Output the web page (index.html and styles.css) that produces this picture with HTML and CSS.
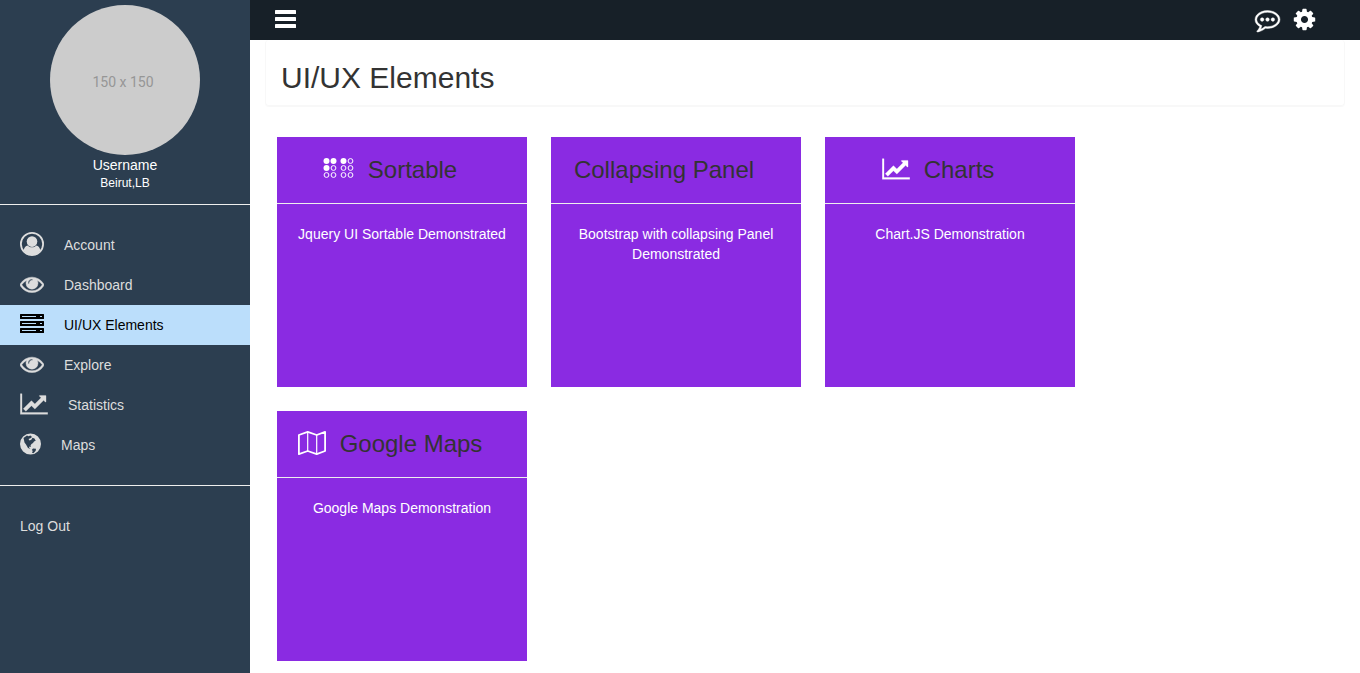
FILE: index.html
```html
<!DOCTYPE html>
<html lang="en">
<head>
<meta charset="utf-8">
<title>UI/UX Elements</title>
<link rel="stylesheet" href="styles.css">
</head>
<body>
<svg class="sprite" aria-hidden="true">
  <symbol id="chart" viewBox="0 0 2048 1792"><path stroke="currentColor" stroke-width="24" d="M2048 1536v128h-2048v-1536h128v1408h1920zm-128-1248v435q0 21-19.5 29.5t-35.5-7.5l-121-121-633 633q-10 10-23 10t-23-10l-233-233-416 416-192-192 585-585q10-10 23-10t23 10l233 233 464-464-121-121q-16-16-7.5-35.5t29.5-19.5h435q14 0 23 9t9 23z"/></symbol>
  <symbol id="eye" viewBox="0 0 1792 1792"><path stroke="currentColor" stroke-width="36" d="M1664 960q-152-236-381-353 61 104 61 225 0 185-131.5 316.5t-316.5 131.5-316.5-131.5-131.5-316.5q0-121 61-225-229 117-381 353 133 205 333.5 326.5t434.5 121.5 434.5-121.5 333.5-326.5zm-720-384q0-20-14-34t-34-14q-125 0-214.5 89.5t-89.5 214.5q0 20 14 34t34 14 34-14 14-34q0-86 61-147t147-61q20 0 34-14t14-34zm848 384q0 34-20 69-140 230-376.5 368.5t-499.5 138.5-499.5-139-376.5-368q-20-35-20-69t20-69q140-229 376.5-368t499.5-139 499.5 139 376.5 368q20 35 20 69z"/></symbol>
</svg>
<div class="layout">
  <aside class="sidebar">
    <div class="profile">
      <div class="avatar">150 x 150</div>
      <div class="name">Username</div>
      <div class="place">Beirut,LB</div>
    </div>
    <nav class="menu">
      <a href="#"><svg class="icon" viewBox="0 0 24 24"><circle cx="12" cy="12" r="11.1" fill="none" stroke="currentColor" stroke-width="1.8"/><circle cx="12" cy="9.600" r="5.300"/><path d="M3.600 18.600C4.200 15.400 5.600 13.600 7.600 13.400c2.600 2.500 6.200 2.500 8.800 0 2 .2 3.400 2 4 5.200C18.500 21.400 15.400 23 12 23s-6.500-1.600-8.400-4.400z"/></svg>Account</a>
      <a href="#"><svg class="icon"><use href="#eye"/></svg>Dashboard</a>
      <a href="#" class="active" aria-current="page"><svg class="icon" viewBox="0 0 24 24"><path fill-rule="evenodd" d="M.5 2h23a.5.500 0 0 1 .5.500v4a.5.500 0 0 1-.5.500H.5A.5.500 0 0 1 0 6.500v-4A.5.500 0 0 1 .5 2zM2 4v1h14V4zM20 4v1h2v-1zM.5 9h23a.5.500 0 0 1 .5.500v4a.5.500 0 0 1-.5.500H.5a.5.500 0 0 1-.5-.5v-4A.5.500 0 0 1 .5 9zM2 11v1h14v-1zM20 11v1h2v-1zM.5 16h23a.5.500 0 0 1 .5.500v4a.5.500 0 0 1-.5.500H.5a.5.500 0 0 1-.5-.5v-4A.5.500 0 0 1 .5 16zM2 18v1h14v-1zM20 18v1h2v-1z"/></svg>UI/UX Elements</a>
      <a href="#"><svg class="icon"><use href="#eye"/></svg>Explore</a>
      <a href="#"><svg class="icon wide"><use href="#chart"/></svg>Statistics</a>
      <a href="#"><svg class="icon narrow" viewBox="0 0 21 24"><path fill-rule="evenodd" d="M10.500 1.500a10.500 10.500 0 1 1 0 21 10.500 10.500 0 0 1 0-21zM3.500 6L7 3.500l1.500.8 2-.8 1.500 1.500-1.500 1.300-2 .7 1 1.500 1.800-.8 1.200-2 2 .8 1.200 2.300-1.700.7-1 1.500-1.500 1-1 1.500.5 1.500-1.500-.5-.5 1 1.500 1.500-2.500-1L6 12.500l-1.500-2L4 8zM13 16.500l3 .3-.3 2-2.200 2.400-1.500-.4.800-1.800-1-1z"/></svg>Maps</a>
    </nav>
    <nav class="menu"><a href="#">Log Out</a></nav>
  </aside>
  <div class="page">
    <header class="topbar">
      <button type="button" aria-label="Toggle menu"><svg class="icon narrow" viewBox="0 0 21 24"><rect y="3" width="21" height="4" rx=".6"/><rect y="10" width="21" height="4" rx=".6"/><rect y="17" width="21" height="4" rx=".6"/></svg></button>
      <div class="actions">
        <button type="button" aria-label="Messages"><svg class="icon large" viewBox="0 0 1792 1792"><path stroke="currentColor" stroke-width="30" d="M640 896q0 53-37.500 90.500t-90.500 37.500-90.500-37.500-37.500-90.500 37.500-90.500 90.500-37.500 90.500 37.500 37.500 90.500zm384 0q0 53-37.500 90.500t-90.500 37.500-90.500-37.500-37.500-90.500 37.500-90.500 90.500-37.500 90.500 37.500 37.500 90.500zm384 0q0 53-37.500 90.500t-90.500 37.500-90.500-37.500-37.500-90.500 37.500-90.500 90.500-37.500 90.500 37.500 37.500 90.500zm-512-512q-204 0-381.500 69.500t-282 187.500-104.500 255q0 112 71.500 213.500t201.500 175.500l87 50-27 96q-24 91-70 172 152-63 275-171l43-38 57 6q69 8 130 8 204 0 381.500-69.500t282-187.500 104.500-255-104.500-255-282-187.500-381.500-69.500zm896 512q0 174-120 321.500t-326 233-450 85.500q-70 0-145-8-198 175-460 242-49 14-114 22h-5q-15 0-27-10.500t-16-27.500v-1q-3-4-.5-12t2-10 4.500-9.500l6-9 7-8.500 8-9q7-8 31-34.500t34.500-38 31-39.500 32.500-51 27-59 26-76q-157-89-247.500-220t-90.500-281q0-174 120-321.500t326-233 450-85.500 450 85.500 326 233 120 321.500z"/></svg></button>
        <button type="button" aria-label="Settings"><svg class="icon large" viewBox="0 0 1792 1792"><path d="M1152 896q0-106-75-181t-181-75-181 75-75 181 75 181 181 75 181-75 75-181zm512-109v222q0 12-8 23t-20 13l-185 28q-19 54-39 91 35 50 107 138 10 12 10 25t-9 23q-27 37-99 108t-94 71q-12 0-26-9l-138-108q-44 23-91 38-16 136-29 186-7 28-36 28h-222q-14 0-24.500-8.500t-11.500-21.500l-28-184q-49-16-90-37l-141 107q-10 9-25 9-14 0-25-11-126-114-165-168-7-10-7-23 0-12 8-23 15-21 51-66.500t54-70.500q-27-50-41-99l-183-27q-13-2-21-12.500t-8-23.500v-222q0-12 8-23t19-13l186-28q14-46 39-92-40-57-107-138-10-12-10-24 0-10 9-23 26-36 98.500-107.500t94.500-71.500q13 0 26 10l138 107q44-23 91-38 16-136 29-186 7-28 36-28h222q14 0 24.500 8.500t11.500 21.500l28 184q49 16 90 37l142-107q9-9 24-9 13 0 25 10 129 119 165 170 7 8 7 22 0 12-8 23-15 21-51 66.500t-54 70.500q26 50 41 98l183 28q13 2 21 12.500t8 23.500z"/></svg></button>
      </div>
    </header>
    <main class="main">
      <h1 class="title">UI/UX Elements</h1>
      <div class="cards">
        <article class="card">
          <h2><svg class="icon dots" viewBox="0 0 31 24"><g><circle cx="3.500" cy="4" r="3"/><circle cx="10.500" cy="4" r="3"/><circle cx="20.500" cy="4" r="3"/><circle cx="3.500" cy="11" r="3"/></g><g fill="none" stroke="currentColor"><circle cx="27.500" cy="4" r="2.400"/><circle cx="10.500" cy="11" r="2.400"/><circle cx="20.500" cy="11" r="2.400"/><circle cx="27.500" cy="11" r="2.400"/><circle cx="3.500" cy="18" r="2.400"/><circle cx="10.500" cy="18" r="2.400"/><circle cx="20.500" cy="18" r="2.400"/><circle cx="27.500" cy="18" r="2.400"/></g></svg>Sortable</h2>
          <p>Jquery UI Sortable Demonstrated</p>
        </article>
        <article class="card">
          <h2>Collapsing Panel</h2>
          <p>Bootstrap with collapsing Panel Demonstrated</p>
        </article>
        <article class="card">
          <h2><svg class="icon wide"><use href="#chart"/></svg>Charts</h2>
          <p>Chart.JS Demonstration</p>
        </article>
        <article class="card">
          <h2><svg class="icon wide" viewBox="0 0 28 24"><g fill="none" stroke="currentColor" stroke-linejoin="round"><path stroke-width="1.800" d="M.9 4L9.700.9l9 3.100 8.400-3.100V20l-8.400 3.100-9-3.100L.9 23.100z"/><path stroke-width="1.200" d="M9.700.8V20M18.700 4v19.200"/></g></svg>Google Maps</h2>
          <p>Google Maps Demonstration</p>
        </article>
      </div>
    </main>
  </div>
</div>
</body>
</html>
```

FILE: styles.css
```css
* { box-sizing: border-box; }
body {
  margin: 0;
  font: 14px/20px "Liberation Sans", Arial, sans-serif;
  color: #333;
  background: #fff;
}
.sprite { display: none; }
.layout { display: flex; min-height: 100vh; }
.icon { width: 24px; height: 24px; flex: none; display: block; margin-bottom: 2px; fill: currentColor; overflow: visible; }
.icon.wide { width: 28px; }
.icon.narrow { width: 21px; }
.icon.large { width: 25px; height: 25px; }
.icon.dots { width: 31px; }

.sidebar { width: 250px; flex: none; background: #2c3e50; color: #fff; }
.profile {
  display: flex;
  flex-direction: column;
  align-items: center;
  padding: 5px 0 12px;
  border-bottom: 1px solid #eee;
}
.avatar {
  display: flex;
  align-items: center;
  justify-content: center;
  width: 150px;
  height: 150px;
  padding: 4px 4px 0 0;
  border-radius: 50%;
  background: #ccc;
  color: #969696;
  font-family: Roboto, sans-serif;
}
.place { font-size: 12px; line-height: 17px; }
.menu { padding: 20px 0; }
.menu + .menu { border-top: 1px solid #eee; }
.menu a {
  display: flex;
  align-items: center;
  gap: 20px;
  height: 40px;
  padding: 0 20px;
  color: #ddd;
  text-decoration: none;
}
.menu a.active { background: #bbdefb; color: #000; }

.page { flex: 1; min-width: 0; }
.topbar {
  display: flex;
  align-items: center;
  justify-content: space-between;
  height: 40px;
  padding: 0 43px 0 25px;
  background: #172028;
}
.topbar button { padding: 0; border: 0; background: none; color: #fff; }
.actions { display: flex; gap: 12px; }
.main { padding: 0 15px; }
.title {
  margin: 0;
  padding: 21px 15px 11px;
  border: 1px solid #f8f8f8;
  border-top: 0;
  border-radius: 4px;
  box-shadow: 0 1px 1px rgba(0, 0, 0, .03);
  font-size: 30px;
  font-weight: 400;
  line-height: 33px;
}
.cards { display: flex; flex-wrap: wrap; gap: 24px; padding: 31px 12px 12px; }
.card { width: 250px; height: 250px; background: #8a2be2; color: #fff; text-align: center; }
.card h2 {
  display: flex;
  align-items: center;
  justify-content: center;
  gap: 14px;
  height: 67px;
  margin: 0;
  padding-right: 24px;
  border-bottom: 1px solid #eee;
  color: #333;
  font-size: 24px;
  font-weight: 400;
  line-height: 26px;
}
.card h2 .icon { color: #fff; }
.card p { margin: 0; padding: 20px; }
```
